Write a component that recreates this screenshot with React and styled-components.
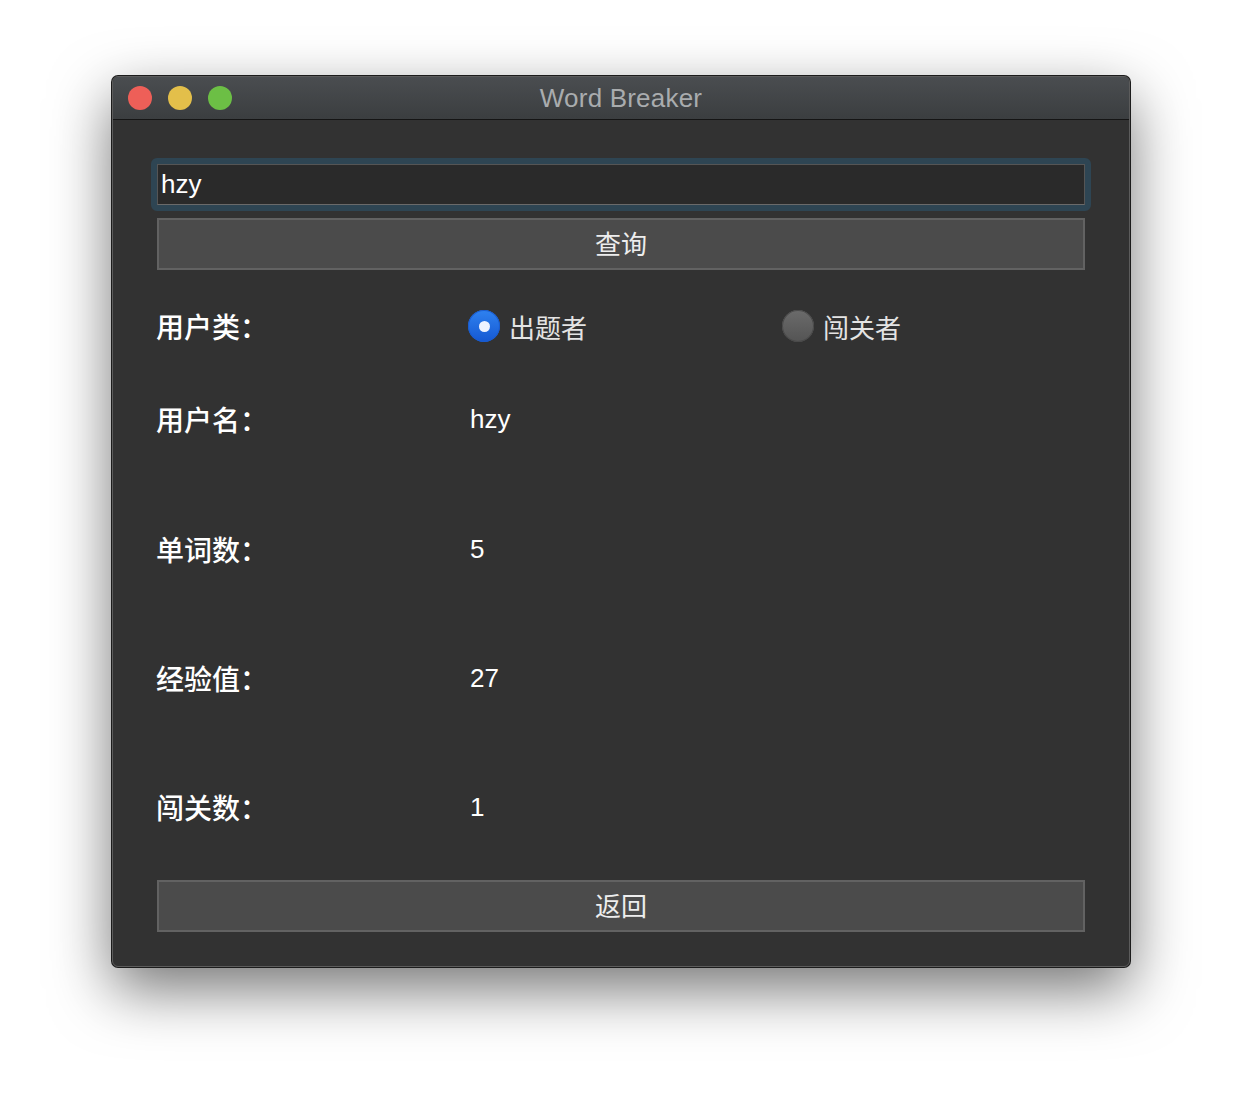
import React from 'react';
import styled, { createGlobalStyle } from 'styled-components';

const fontStack = '"Liberation Sans", "Noto Sans CJK SC", sans-serif';

const GlobalStyle = createGlobalStyle`
  html, body {
    margin: 0;
    padding: 0;
    background: #ffffff;
    font-family: ${fontStack};
  }
`;

const Page = styled.div`
  width: 1242px;
  height: 1116px;
  padding: 76px 0 0 112px;
  box-sizing: border-box;
  overflow: hidden;
`;

const Window = styled.div`
  width: 1018px;
  height: 891px;
  box-sizing: border-box;
  border-radius: 6px;
  background: #323232;
  border: 1px solid #5c5c5c;
  box-shadow: 0 0 0 1px #1c1c1c, 0 22px 60px rgba(0, 0, 0, 0.55);
  display: flex;
  flex-direction: column;
  overflow: hidden;
`;

const TitleBar = styled.div`
  height: 42px;
  flex-shrink: 0;
  position: relative;
  display: flex;
  align-items: center;
  justify-content: center;
  background: linear-gradient(#4a4d50, #3b3e40);
  border-bottom: 1px solid #151515;
`;

const Lights = styled.div`
  position: absolute;
  left: 15px;
  top: 9px;
  display: flex;
  gap: 16px;
`;

const Light = styled.span`
  width: 24px;
  height: 24px;
  border-radius: 50%;
  background: ${p => p.color};
`;

const Title = styled.div`
  font-size: 26px;
  color: #a9acae;
  letter-spacing: 0.2px;
`;

const Body = styled.div`
  flex: 1;
  display: flex;
  flex-direction: column;
  padding: 38px 44px 0 44px;
`;

const FocusRing = styled.div`
  border: 6px solid #2e4553;
  border-radius: 6px;
  margin: 0 -6px;
`;

const Input = styled.input`
  display: block;
  width: 100%;
  box-sizing: border-box;
  height: 41px;
  background: #2a2a2a;
  border: 1px solid #555;
  border-bottom-color: #6a6a6a;
  color: #ffffff;
  font-family: ${fontStack};
  font-size: 26px;
  padding: 0 3px;
  outline: none;
`;

const Button = styled.button`
  display: block;
  width: 100%;
  height: 52px;
  margin-top: ${p => p.$top}px;
  box-sizing: border-box;
  background: #4b4b4b;
  border: 2px solid #626262;
  color: #ededed;
  font-family: ${fontStack};
  font-size: 26px;
  padding: 0 0 4px;
`;

const Row = styled.div`
  display: grid;
  grid-template-columns: 311px 314px 1fr;
  align-items: center;
  height: 40px;
  margin-top: ${p => p.$top}px;
`;

const Label = styled.div`
  font-size: 28px;
  color: #ffffff;
  font-weight: 500;
  margin-left: -1px;
`;

const Value = styled.div`
  font-size: 26px;
  color: #ffffff;
  padding-left: 2px;
`;

const RadioItem = styled.div`
  display: flex;
  align-items: center;
  gap: 9px;
`;

const RadioDot = styled.span`
  width: 32px;
  height: 32px;
  border-radius: 50%;
  box-sizing: border-box;
  display: flex;
  align-items: center;
  justify-content: center;
  background: ${p => (p.$on ? 'linear-gradient(#2f82f0, #1558d2)' : 'linear-gradient(#6b6b6b, #545454)')};
  box-shadow: inset 0 0 0 1px ${p => (p.$on ? '#1a5ccf' : '#4a4a4a')};

  &::after {
    content: '';
    display: ${p => (p.$on ? 'block' : 'none')};
    width: 11px;
    height: 11px;
    border-radius: 50%;
    background: #eef3ff;
  }
`;

const RadioText = styled.span`
  font-size: 26px;
  color: #e4e4e4;
`;

const stats = [
  { label: '用户名：', value: 'hzy', top: 53 },
  { label: '单词数：', value: '5', top: 90 },
  { label: '经验值：', value: '27', top: 89 },
  { label: '闯关数：', value: '1', top: 89 }
];

export default function App() {
  return (
    <Page>
      <GlobalStyle />
      <Window>
        <TitleBar>
          <Lights>
            <Light color="#ee5f58" />
            <Light color="#e3bf4a" />
            <Light color="#6cbf45" />
          </Lights>
          <Title>Word Breaker</Title>
        </TitleBar>
        <Body>
          <FocusRing>
            <Input defaultValue="hzy" />
          </FocusRing>
          <Button $top={7}>查询</Button>
          <Row $top={36}>
            <Label>用户类：</Label>
            <RadioItem>
              <RadioDot $on />
              <RadioText>出题者</RadioText>
            </RadioItem>
            <RadioItem>
              <RadioDot />
              <RadioText>闯关者</RadioText>
            </RadioItem>
          </Row>
          {stats.map(s => (
            <Row key={s.label} $top={s.top}>
              <Label>{s.label}</Label>
              <Value>{s.value}</Value>
            </Row>
          ))}
          <Button $top={53}>返回</Button>
        </Body>
      </Window>
    </Page>
  );
}
